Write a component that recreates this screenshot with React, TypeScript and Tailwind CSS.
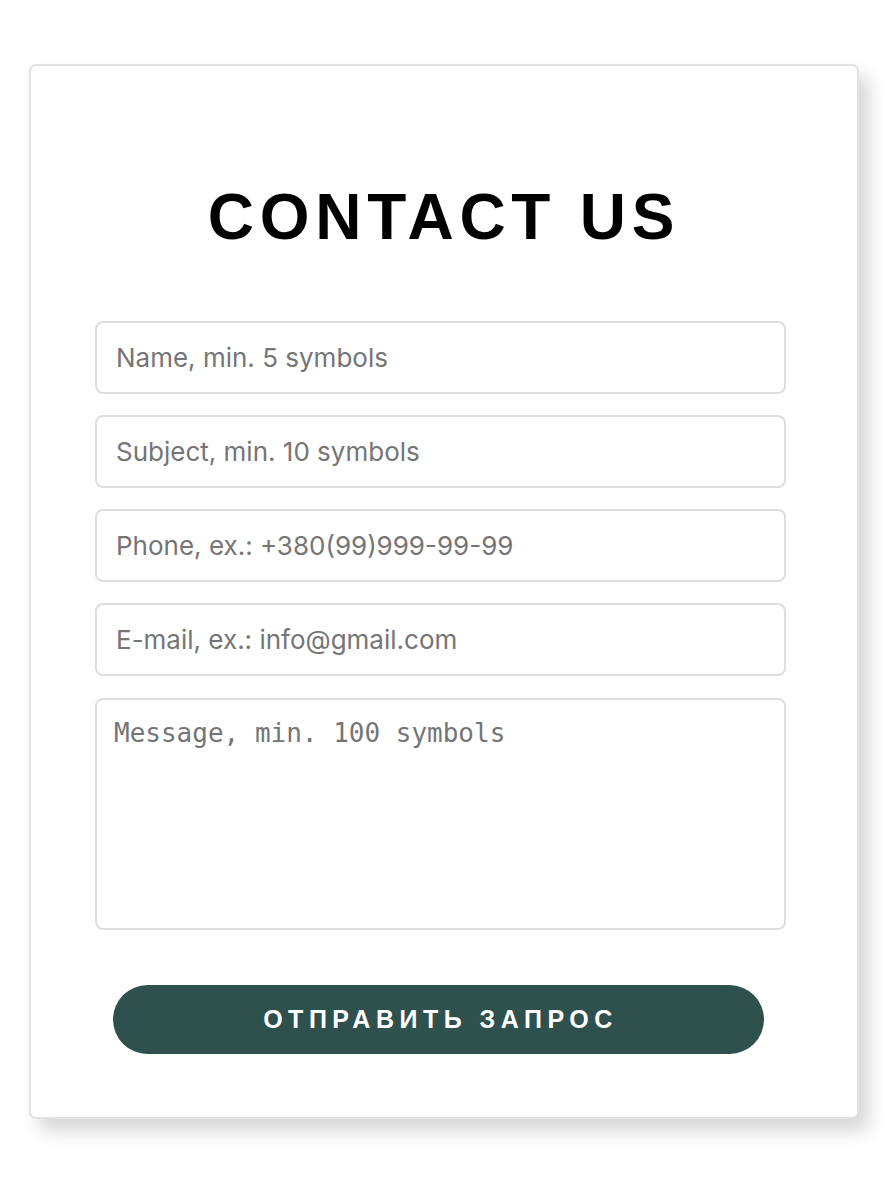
import React from "react";

const inputCls =
  "block w-full h-[73px] border-2 border-[#dedede] rounded-[8px] px-[19px] text-[26px] text-[#333] placeholder:text-[#757575] outline-none bg-white font-['Inter','Liberation_Sans',sans-serif]";

export default function App() {
  return (
    <div className="min-h-[1184px] w-[886px] bg-white pt-[64px] pl-[29px]">
      <div className="w-[830px] h-[1055px] border-2 border-[#e2e2e2] rounded-[7px] bg-white shadow-[10px_12px_18px_rgba(0,0,0,0.16)] pt-[119px]">
        <h1 className="text-center text-[64px] leading-none font-bold tracking-[0.09em] text-black font-['Liberation_Sans',Arial,sans-serif]">
          CONTACT US
        </h1>
        <form className="mt-[72px] ml-[64px] w-[691px] flex flex-col gap-[21px]">
          <input className={inputCls} placeholder="Name, min. 5 symbols" />
          <input className={inputCls} placeholder="Subject, min. 10 symbols" />
          <input className={inputCls} placeholder="Phone, ex.: +380(99)999-99-99" />
          <input className={inputCls} placeholder="E-mail, ex.: info@gmail.com" />
          <textarea
            className="block w-full h-[232px] mt-[1px] border-2 border-[#dedede] rounded-[8px] px-[17px] pt-[18px] text-[26px] leading-[1.2] text-[#333] placeholder:text-[#757575] outline-none resize-none bg-white font-['DejaVu_Sans_Mono',monospace]"
            placeholder="Message, min. 100 symbols"
          />
        </form>
        <button
          type="button"
          className="mt-[55px] ml-[82px] w-[651px] h-[69px] pl-[4px] rounded-full bg-[#2f514e] text-white text-[25px] font-bold tracking-[0.22em] font-['Liberation_Sans',Arial,sans-serif]"
        >
          ОТПРАВИТЬ ЗАПРОС
        </button>
      </div>
    </div>
  );
}
